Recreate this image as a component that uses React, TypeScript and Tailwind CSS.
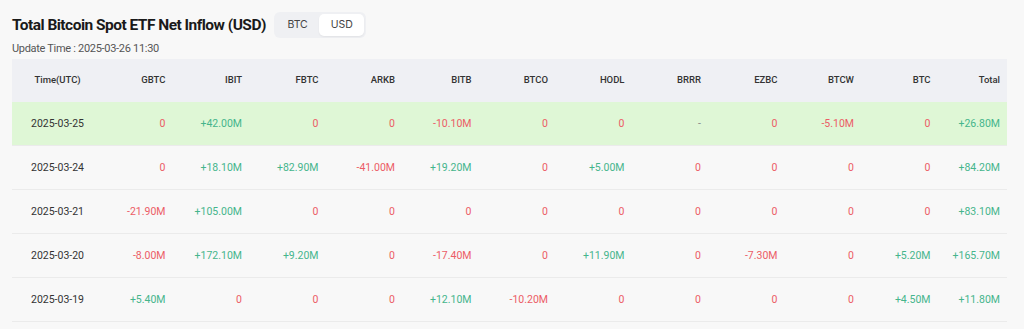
import React from "react";

const cols = ["GBTC", "IBIT", "FBTC", "ARKB", "BITB", "BTCO", "HODL", "BRRR", "EZBC", "BTCW", "BTC", "Total"];

const rows: { date: string; values: string[]; highlight?: boolean }[] = [
  {
    date: "2025-03-25",
    highlight: true,
    values: ["0", "+42.00M", "0", "0", "-10.10M", "0", "0", "-", "0", "-5.10M", "0", "+26.80M"],
  },
  {
    date: "2025-03-24",
    values: ["0", "+18.10M", "+82.90M", "-41.00M", "+19.20M", "0", "+5.00M", "0", "0", "0", "0", "+84.20M"],
  },
  {
    date: "2025-03-21",
    values: ["-21.90M", "+105.00M", "0", "0", "0", "0", "0", "0", "0", "0", "0", "+83.10M"],
  },
  {
    date: "2025-03-20",
    values: ["-8.00M", "+172.10M", "+9.20M", "0", "-17.40M", "0", "+11.90M", "0", "-7.30M", "0", "+5.20M", "+165.70M"],
  },
  {
    date: "2025-03-19",
    values: ["+5.40M", "0", "0", "0", "+12.10M", "-10.20M", "0", "0", "0", "0", "+4.50M", "+11.80M"],
  },
];

function tone(v: string) {
  if (v === "-") return "text-[#8a8a8a]";
  if (v.startsWith("+")) return "text-[#45b58c]";
  return "text-[#ec5c66]";
}

const grid = "grid grid-cols-[89px_repeat(11,76.5px)_1fr] items-center";

export default function App() {
  return (
    <div className="min-h-[329px] w-[1024px] bg-[#f8f8f8] px-3 pt-3 font-['Roboto',sans-serif]">
      <div className="flex h-[26px] items-center gap-[8px]">
        <h1 className="text-[15.5px] leading-[26px] font-bold tracking-[-0.52px] text-[#1a1a1a]">
          Total Bitcoin Spot ETF Net Inflow (USD)
        </h1>
        <div className="flex h-[26px] items-center rounded-md bg-[#eff0f3] p-[2px] font-['Inter',sans-serif] text-[10.5px] text-[#444]">
          <span className="px-[11.5px]">BTC</span>
          <span className="flex h-full items-center rounded-[5px] bg-white px-[11.5px] shadow-[0_1px_2px_rgba(0,0,0,0.06)]">
            USD
          </span>
        </div>
      </div>
      <p className="mt-[3px] text-[11px] leading-[16px] tracking-[-0.3px] text-[#555]">Update Time : 2025-03-26 11:30</p>

      <div className="mt-[2px] w-[995px] text-[10.5px]">
        <div className={`${grid} h-[43px] bg-[#eff0f4] text-[9.5px] font-medium text-[#333]`}>
          <div className="text-center pl-[2px]">Time(UTC)</div>
          {cols.map((c, i) => (
            <div key={c} className={`text-right ${i === cols.length - 1 ? "pr-[7px]" : "pr-[12px]"}`}>
              {c}
            </div>
          ))}
        </div>
        {rows.map((r) => (
          <div
            key={r.date}
            className={`${grid} h-[44px] border-b border-[#ebebeb] ${r.highlight ? "bg-[#dff7d6]" : ""}`}
          >
            <div className="text-center pl-[2px] text-[#333]">{r.date}</div>
            {r.values.map((v, i) => (
              <div
                key={i}
                className={`text-right ${tone(v)} ${i === r.values.length - 1 ? "pr-[7px]" : "pr-[12px]"}`}
              >
                {v}
              </div>
            ))}
          </div>
        ))}
      </div>
    </div>
  );
}
